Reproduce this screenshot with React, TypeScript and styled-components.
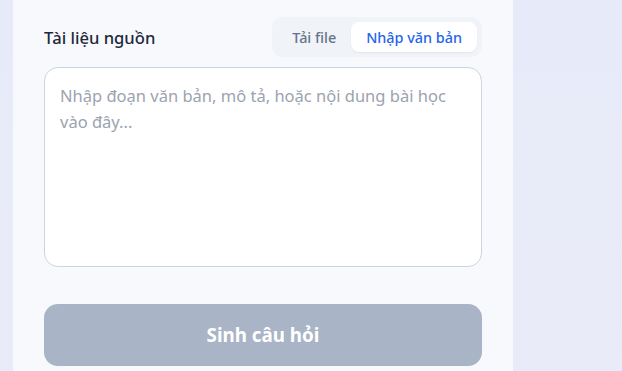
import React, { useState } from 'react'
import styled, { createGlobalStyle } from 'styled-components'

const GlobalStyle = createGlobalStyle`
  html, body {
    margin: 0;
    padding: 0;
    height: 100%;
    overflow: hidden;
    background: #e9ebf8;
    font-family: "Noto Sans", "Open Sans", sans-serif;
  }
`

const Page = styled.div`
  display: flex;
  min-height: 371px;
  padding-left: 13px;
  background: linear-gradient(180deg, #e7eaf8 0%, #e9ebf8 100%);
`

const Panel = styled.section`
  width: 500px;
  box-sizing: border-box;
  padding: 17px 31px 0;
  background: #f8f9fd;
  display: flex;
  flex-direction: column;
`

const HeaderRow = styled.div`
  display: flex;
  align-items: center;
  justify-content: space-between;
  height: 40px;
`

const Title = styled.h3`
  margin: 0;
  font-size: 16.6px;
  font-weight: 500;
  color: #1e293b;
`

const Segmented = styled.div`
  display: flex;
  padding: 5px;
  border-radius: 11px;
  background: #f0f3f7;
`

const Tab = styled.button<{ active?: boolean }>`
  border: none;
  height: 30px;
  padding: 0 15px;
  border-radius: 8px;
  font-family: inherit;
  font-size: 14.4px;
  font-weight: 500;
  cursor: pointer;
  background: ${p => (p.active ? '#ffffff' : 'transparent')};
  color: ${p => (p.active ? '#2563eb' : '#64748b')};
  box-shadow: ${p => (p.active ? '0 1px 2px rgba(15, 23, 42, 0.06)' : 'none')};
`

const Source = styled.textarea`
  margin-top: 10px;
  height: 200px;
  box-sizing: border-box;
  padding: 15px 15px;
  border: 1px solid #cbd5e1;
  border-radius: 14px;
  background: #ffffff;
  font-family: inherit;
  font-size: 16.5px;
  line-height: 26px;
  color: #1e293b;
  resize: none;
  outline: none;

  &::placeholder {
    color: #9ca3af;
  }
`

const Submit = styled.button`
  margin-top: 37px;
  height: 62px;
  border: none;
  border-radius: 14px;
  background: #a9b4c6;
  color: #ffffff;
  font-family: inherit;
  font-size: 18.8px;
  font-weight: 700;
  cursor: not-allowed;
`

function App() {
  const [mode, setMode] = useState<'file' | 'text'>('text')
  const [text, setText] = useState('')

  return (
    <Page>
      <GlobalStyle />
      <Panel>
        <HeaderRow>
          <Title>Tài liệu nguồn</Title>
          <Segmented>
            <Tab active={mode === 'file'} onClick={() => setMode('file')}>Tải file</Tab>
            <Tab active={mode === 'text'} onClick={() => setMode('text')}>Nhập văn bản</Tab>
          </Segmented>
        </HeaderRow>
        <Source
          value={text}
          onChange={e => setText(e.target.value)}
          placeholder="Nhập đoạn văn bản, mô tả, hoặc nội dung bài học vào đây..."
        />
        <Submit disabled={!text}>Sinh câu hỏi</Submit>
      </Panel>
    </Page>
  )
}

export default App
